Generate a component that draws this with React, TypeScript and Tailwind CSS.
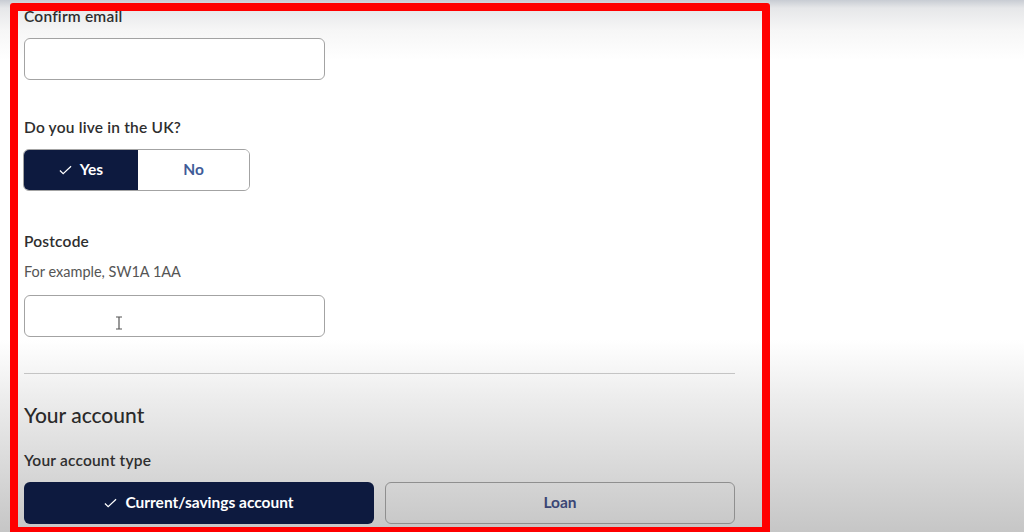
import React from 'react';

const font = { fontFamily: 'Lato, "Noto Sans", sans-serif' };

const Tick: React.FC<{ className?: string }> = ({ className }) => (
  <svg viewBox="0 0 14 10" className={className} fill="none">
    <polyline points="1,5.5 4.5,9 13,1" stroke="currentColor" strokeWidth="1.3" />
  </svg>
);

const TextInput: React.FC<{ cursor?: boolean }> = ({ cursor }) => (
  <div className="relative w-[301px] h-[42px] rounded-[6px] border-[1.5px] border-[#a3a3a3] bg-white">
    {cursor && (
      <svg viewBox="0 0 8 14" className="absolute left-[90px] top-[20px] w-[8px] h-[14px]" fill="none">
        <path d="M1 1h6M4 1v12M1 13h6" stroke="#555" strokeWidth="1.2" />
      </svg>
    )}
  </div>
);

const App: React.FC = () => {
  return (
    <div
      className="relative w-[1024px] h-[532px] overflow-hidden bg-[linear-gradient(to_bottom,#c8ccd3_0px,#e6e7e9_8px,#f6f6f6_30px,#ffffff_60px,#ffffff_340px,#ececec_400px,#d8d8d8_470px,#c6c6c6_532px)]"
      style={font}
    >
      <div className="flex flex-col pl-[24px] w-[735px]">
        <div className="mt-[6px] h-[20px] leading-[20px] text-[15.5px] font-semibold tracking-[0.2px] text-[#2e2e2e]">Confirm email</div>
        <div className="mt-[12px]">
          <TextInput />
        </div>

        <div className="mt-[37px] h-[20px] leading-[20px] text-[15.5px] font-semibold tracking-[0.2px] text-[#2e2e2e]">Do you live in the UK?</div>
        <div className="mt-[12px] flex w-[227px] h-[42px] rounded-[6px] overflow-hidden border-[1.5px] border-[#a3a3a3] -ml-[1px]">
          <div className="w-[114px] bg-[#0d1a3f] flex items-center justify-center gap-[8px] text-white text-[15.5px] font-bold">
            <Tick className="w-[13px] h-[10px]" />
            <span>Yes</span>
          </div>
          <div className="flex-1 bg-white flex items-center justify-center text-[#3f5c98] text-[15.5px] font-bold">No</div>
        </div>

        <div className="mt-[40px] h-[20px] leading-[20px] text-[15.5px] font-semibold tracking-[0.2px] text-[#2e2e2e]">Postcode</div>
        <div className="mt-[11px] h-[20px] leading-[20px] text-[14.5px] text-[#555555]">For example, SW1A 1AA</div>
        <div className="mt-[13px]">
          <TextInput cursor />
        </div>

        <div className="mt-[36px] h-px bg-[#c4c4c4]" />

        <div className="mt-[27px] h-[28px] leading-[28px] text-[21px] font-medium text-[#2a2a2a]">Your account</div>
        <div className="mt-[21px] h-[20px] leading-[20px] text-[15.5px] font-semibold tracking-[0.2px] text-[#2e2e2e]">Your account type</div>
        <div className="mt-[12px] flex gap-[11px]">
          <div className="w-[350px] h-[42px] rounded-[6px] bg-[#0d1a3f] flex items-center justify-center gap-[8px] text-white text-[15.5px] font-bold">
            <Tick className="w-[13px] h-[10px]" />
            <span>Current/savings account</span>
          </div>
          <div className="w-[350px] h-[42px] rounded-[6px] border-[1.5px] border-[#8f8f8f] flex items-center justify-center text-[#3b4675] text-[15.5px] font-bold">
            Loan
          </div>
        </div>
      </div>

      <div className="absolute left-[10px] top-[3px] w-[760px] h-[532px] border-[8px] border-[#ff0000] rounded-[3px] pointer-events-none" />
    </div>
  );
};

export default App;
